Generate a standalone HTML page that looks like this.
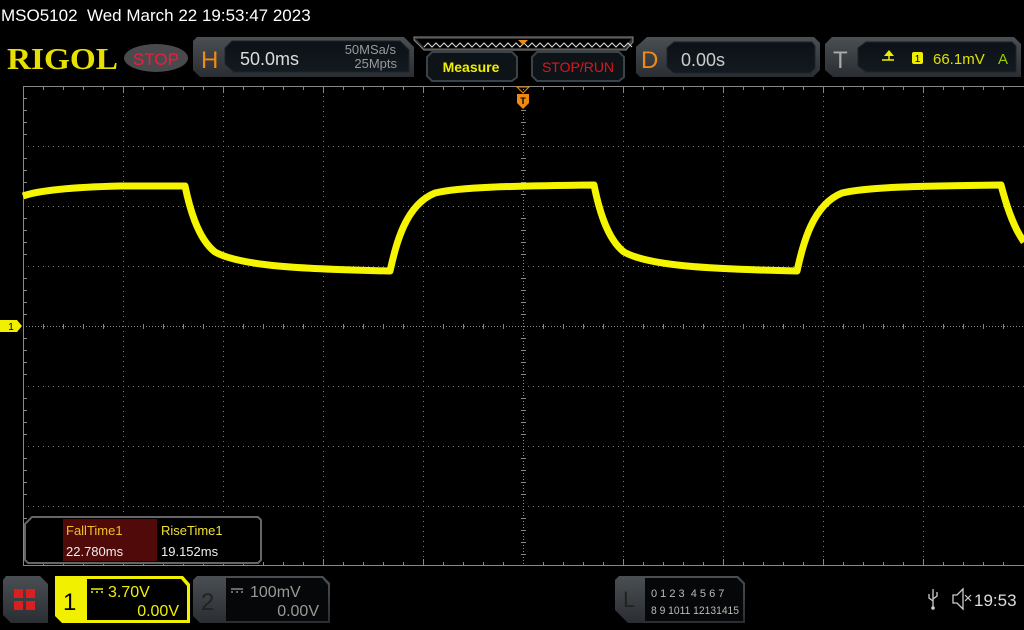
<!DOCTYPE html>
<html><head><meta charset="utf-8"><style>
html,body{margin:0;padding:0;background:#000;width:1024px;height:630px;overflow:hidden}
svg{display:block}
text{font-family:"Liberation Sans",sans-serif}
</style></head><body>
<svg width="1024" height="630" viewBox="0 0 1024 630" xmlns="http://www.w3.org/2000/svg">
<defs>
<linearGradient id="pg" x1="0" y1="0" x2="0" y2="1"><stop offset="0" stop-color="#4a4f54"/><stop offset="1" stop-color="#2a2e32"/></linearGradient>
<linearGradient id="ig" x1="0" y1="0" x2="0" y2="1"><stop offset="0" stop-color="#0b1116"/><stop offset="1" stop-color="#131a20"/></linearGradient>
</defs>
<rect width="1024" height="630" fill="#000"/>
<text x="1" y="21" font-size="17" fill="#fff" style="white-space:pre" xml:space="preserve">MSO5102  Wed March 22 19:53:47 2023</text>

<!-- RIGOL -->
<text x="7" y="69" style="font-family:'Liberation Serif',serif;font-weight:bold" font-size="31" fill="#e8e000" textLength="111" lengthAdjust="spacingAndGlyphs">RIGOL</text>
<ellipse cx="156" cy="58" rx="32" ry="14" fill="#4a4a4e"/>
<text x="156" y="65" font-size="17" fill="#e8203a" text-anchor="middle">STOP</text>

<!-- H box -->
<polygon points="197,37 404,37 414,47 414,77 200,77 193,70 193,41" fill="url(#pg)"/>
<polygon points="232,41 400,41 409,50 409,72 234,72 225,64 225,48" fill="url(#ig)" stroke="#1d2328"/>
<text x="201" y="68" font-size="24" fill="#f08a10">H</text>
<text x="240" y="65" font-size="18" fill="#ddd">50.0ms</text>
<text x="396" y="54" font-size="13" fill="#999" text-anchor="end">50MSa/s</text>
<text x="397" y="68" font-size="13" fill="#999" text-anchor="end">25Mpts</text>

<!-- timeline strip -->
<polygon points="414,37 633,37 633,42 626,50 424,50 414,40" fill="#333" stroke="#888" stroke-width="1"/>
<polygon points="416,39 631,39 625,48 425,48" fill="#000"/>
<path d="M424,47 l4,-4 l4,4 l4,-4 l4,4 l4,-4 l4,4 l4,-4 l4,4 l4,-4 l4,4 l4,-4 l4,4 l4,-4 l4,4 l4,-4 l4,4 l4,-4 l4,4 l4,-4 l4,4 l4,-4 l4,4 l4,-4 l4,4 l4,-4 l4,4 l4,-4 l4,4 l4,-4 l4,4 l4,-4 l4,4 l4,-4 l4,4 l4,-4 l4,4 l4,-4 l4,4 l4,-4 l4,4 l4,-4 l4,4 l4,-4 l4,4 l4,-4 l4,4 l4,-4 l4,4 l4,-4 l4,4 l4,-4 l4,4" fill="none" stroke="#ddd" stroke-width="1"/>
<polygon points="518,40 528,40 523,45" fill="#f08a10"/>

<!-- Measure / STOP-RUN buttons -->
<polygon points="432,52 512,52 517,57 517,77 512,81 432,81 427,76 427,57" fill="#0e1317" stroke="#3a4349" stroke-width="2"/>
<text x="471" y="72" font-size="14" font-weight="bold" fill="#f0f000" text-anchor="middle">Measure</text>
<polygon points="537,52 619,52 624,57 624,77 619,81 537,81 532,76 532,57" fill="#0e1317" stroke="#3a4349" stroke-width="2"/>
<text x="578" y="72" font-size="14" fill="#e0141e" text-anchor="middle">STOP/RUN</text>

<!-- D box -->
<polygon points="647,37 814,37 820,43 820,70 813,77 640,77 636,73 636,47" fill="url(#pg)"/>
<polygon points="674,42 812,42 815,46 815,68 810,73 674,73 667,67 667,48" fill="url(#ig)" stroke="#1d2328"/>
<text x="641" y="68" font-size="24" fill="#f08a10">D</text>
<text x="681" y="66" font-size="18" fill="#ccc">0.00s</text>

<!-- T box -->
<polygon points="832,37 1014,37 1021,44 1021,77 833,77 825,70 825,44" fill="url(#pg)"/>
<polygon points="866,42 1012,42 1016,46 1016,72 866,72 858,66 858,48" fill="url(#ig)" stroke="#1d2328"/>
<text x="833" y="68" font-size="24" fill="#aaa">T</text>
<path d="M882,60 h8 M889,53 v7 h5" fill="none" stroke="#ee0" stroke-width="1.5"/>
<polygon points="884,56 894,56 889,50" fill="#ee0"/>
<rect x="912" y="52" width="11" height="12" rx="2" fill="#ee0"/>
<text x="917.5" y="62" font-size="10" fill="#000" text-anchor="middle">1</text>
<text x="933" y="64" font-size="15" fill="#e0e000">66.1mV</text>
<text x="998" y="64" font-size="15" fill="#9c0">A</text>

<!-- Grid -->
<g stroke="#7a7a7a" stroke-width="1" stroke-dasharray="1,4">
<line x1="123.5" y1="86" x2="123.5" y2="566"/><line x1="223.5" y1="86" x2="223.5" y2="566"/><line x1="323.5" y1="86" x2="323.5" y2="566"/><line x1="423.5" y1="86" x2="423.5" y2="566"/>
<line x1="623.5" y1="86" x2="623.5" y2="566"/><line x1="723.5" y1="86" x2="723.5" y2="566"/><line x1="823.5" y1="86" x2="823.5" y2="566"/><line x1="923.5" y1="86" x2="923.5" y2="566"/>
<line x1="23" y1="146.5" x2="1024" y2="146.5"/><line x1="23" y1="206.5" x2="1024" y2="206.5"/><line x1="23" y1="266.5" x2="1024" y2="266.5"/>
<line x1="23" y1="386.5" x2="1024" y2="386.5"/><line x1="23" y1="446.5" x2="1024" y2="446.5"/><line x1="23" y1="506.5" x2="1024" y2="506.5"/>
</g>
<g stroke="#8a8a8a" stroke-width="1" stroke-dasharray="1,2">
<line x1="523.5" y1="86" x2="523.5" y2="566"/><line x1="23" y1="326.5" x2="1024" y2="326.5"/>
</g>
<g stroke="#888" stroke-width="1" fill="none">
<line x1="23.5" y1="86" x2="23.5" y2="566"/>
<line x1="23" y1="86.5" x2="1024" y2="86.5"/>
<line x1="23" y1="565.5" x2="1024" y2="565.5"/>
</g>
<g stroke="#888" stroke-width="1">
<path d="M43.5,86v4M63.5,86v4M83.5,86v4M103.5,86v4M123.5,86v7M143.5,86v4M163.5,86v4M183.5,86v4M203.5,86v4M223.5,86v7M243.5,86v4M263.5,86v4M283.5,86v4M303.5,86v4M323.5,86v7M343.5,86v4M363.5,86v4M383.5,86v4M403.5,86v4M423.5,86v7M443.5,86v4M463.5,86v4M483.5,86v4M503.5,86v4M543.5,86v4M563.5,86v4M583.5,86v4M603.5,86v4M623.5,86v7M643.5,86v4M663.5,86v4M683.5,86v4M703.5,86v4M723.5,86v7M743.5,86v4M763.5,86v4M783.5,86v4M803.5,86v4M823.5,86v7M843.5,86v4M863.5,86v4M883.5,86v4M903.5,86v4M923.5,86v7M943.5,86v4M963.5,86v4M983.5,86v4M1003.5,86v4"/>
<path d="M43.5,566v-4M63.5,566v-4M83.5,566v-4M103.5,566v-4M123.5,566v-7M143.5,566v-4M163.5,566v-4M183.5,566v-4M203.5,566v-4M223.5,566v-7M243.5,566v-4M263.5,566v-4M283.5,566v-4M303.5,566v-4M323.5,566v-7M343.5,566v-4M363.5,566v-4M383.5,566v-4M403.5,566v-4M423.5,566v-7M443.5,566v-4M463.5,566v-4M483.5,566v-4M503.5,566v-4M543.5,566v-4M563.5,566v-4M583.5,566v-4M603.5,566v-4M623.5,566v-7M643.5,566v-4M663.5,566v-4M683.5,566v-4M703.5,566v-4M723.5,566v-7M743.5,566v-4M763.5,566v-4M783.5,566v-4M803.5,566v-4M823.5,566v-7M843.5,566v-4M863.5,566v-4M883.5,566v-4M903.5,566v-4M923.5,566v-7M943.5,566v-4M963.5,566v-4M983.5,566v-4M1003.5,566v-4"/>
<path d="M43.5,324v5M63.5,324v5M83.5,324v5M103.5,324v5M143.5,324v5M163.5,324v5M183.5,324v5M203.5,324v5M243.5,324v5M263.5,324v5M283.5,324v5M303.5,324v5M343.5,324v5M363.5,324v5M383.5,324v5M403.5,324v5M443.5,324v5M463.5,324v5M483.5,324v5M503.5,324v5M543.5,324v5M563.5,324v5M583.5,324v5M603.5,324v5M643.5,324v5M663.5,324v5M683.5,324v5M703.5,324v5M743.5,324v5M763.5,324v5M783.5,324v5M803.5,324v5M843.5,324v5M863.5,324v5M883.5,324v5M903.5,324v5M943.5,324v5M963.5,324v5M983.5,324v5M1003.5,324v5"/>
<path d="M23,98.5h4M23,110.5h4M23,122.5h4M23,134.5h4M23,158.5h4M23,170.5h4M23,182.5h4M23,194.5h4M23,218.5h4M23,230.5h4M23,242.5h4M23,254.5h4M23,278.5h4M23,290.5h4M23,302.5h4M23,314.5h4M23,338.5h4M23,350.5h4M23,362.5h4M23,374.5h4M23,398.5h4M23,410.5h4M23,422.5h4M23,434.5h4M23,458.5h4M23,470.5h4M23,482.5h4M23,494.5h4M23,518.5h4M23,530.5h4M23,542.5h4M23,554.5h4"/>
<path d="M521,98.5h5M521,110.5h5M521,122.5h5M521,134.5h5M521,158.5h5M521,170.5h5M521,182.5h5M521,194.5h5M521,218.5h5M521,230.5h5M521,242.5h5M521,254.5h5M521,278.5h5M521,290.5h5M521,302.5h5M521,314.5h5M521,338.5h5M521,350.5h5M521,362.5h5M521,374.5h5M521,398.5h5M521,410.5h5M521,422.5h5M521,434.5h5M521,458.5h5M521,470.5h5M521,482.5h5M521,494.5h5M521,518.5h5M521,530.5h5M521,542.5h5M521,554.5h5"/>
</g>

<!-- trigger marker -->
<path d="M517,87 h12 l-6,6 z" fill="none" stroke="#f08a10"/>
<path d="M517,94 h12 v9 l-6,6 l-6,-6 z" fill="#f08a10"/>
<text x="523" y="104" font-size="9" font-weight="bold" fill="#000" text-anchor="middle">T</text>

<!-- CH1 ground marker -->
<polygon points="0,320 17,320 22,326 17,332 0,332" fill="#f0f000"/>
<text x="11" y="330" font-size="10" fill="#000" text-anchor="middle">1</text>

<!-- Waveform -->
<path d="M23,196 C40,190 80,187 120,186 L185,186
C189,205 197,238 215,252 C240,266 300,269 390,271
C396,245 405,205 435,193 C460,187 510,186 594,185
C598,205 606,238 624,252 C649,266 709,269 797,271
C803,245 812,205 842,193 C867,187 917,186 1001,185
C1005,200 1012,225 1024,242"
fill="none" stroke="#f5f500" stroke-width="7" stroke-linejoin="round"/>

<!-- measurement panel -->
<polygon points="32,517 258,517 261,520 261,560 258,563 28,563 25,560 25,524" fill="#000" stroke="#666" stroke-width="2"/>
<rect x="63" y="519" width="94" height="42" fill="#500a0a"/>
<text x="66" y="535" font-size="13" fill="#f0c020">FallTime1</text>
<text x="66" y="556" font-size="13" fill="#eee">22.780ms</text>
<text x="161" y="535" font-size="13" fill="#f0e030">RiseTime1</text>
<text x="161" y="556" font-size="13" fill="#eee">19.152ms</text>

<!-- bottom: menu -->
<polygon points="6,576 40,576 48,584 48,623 11,623 3,615 3,580" fill="url(#pg)"/>
<rect x="14" y="589" width="9" height="9" fill="#d82020"/><rect x="26" y="589" width="9" height="9" fill="#d82020"/>
<rect x="14" y="601" width="9" height="9" fill="#d82020"/><rect x="26" y="601" width="9" height="9" fill="#d82020"/>

<!-- CH1 -->
<polygon points="55,576 183,576 190,584 190,623 62,623 55,616" fill="#f0f000"/>
<polygon points="87,579 181,579 187,586 187,620 87,620" fill="#000"/>
<text x="63" y="610" font-size="24" fill="#000">1</text>
<path d="M91,589h12M91,592h2M96,592h2M101,592h2" stroke="#f0f000" stroke-width="1.5"/>
<text x="108" y="597" font-size="16" fill="#f0f000">3.70V</text>
<text x="179" y="616" font-size="16" fill="#f0f000" text-anchor="end">0.00V</text>

<!-- CH2 -->
<polygon points="197,576 323,576 330,583 330,623 200,623 193,616 193,580" fill="url(#pg)"/>
<polygon points="226,578 322,578 328,585 328,621 226,621" fill="#050708"/>
<text x="201" y="610" font-size="24" fill="#222">2</text>
<path d="M231,589h12M231,592h2M236,592h2M241,592h2" stroke="#888" stroke-width="1.5"/>
<text x="250" y="597" font-size="16" fill="#999">100mV</text>
<text x="319" y="616" font-size="16" fill="#999" text-anchor="end">0.00V</text>

<!-- L box -->
<polygon points="619,576 738,576 745,583 745,623 628,623 615,610 615,580" fill="url(#pg)"/>
<polygon points="645,578 737,578 743,584 743,621 645,621" fill="#050708"/>
<text x="623" y="607" font-size="22" fill="#222">L</text>
<text x="651" y="597" font-size="11" fill="#bbb" style="white-space:pre" xml:space="preserve">0 1 2 3  4 5 6 7</text>
<text x="651" y="614" font-size="11" fill="#bbb" textLength="88" lengthAdjust="spacingAndGlyphs">8 9 1011 12131415</text>

<!-- status icons -->
<path d="M933,589 v18 M929,594 v4 l4,3 M937,592 v4 l-4,3" stroke="#ccc" stroke-width="1.3" fill="none"/>
<circle cx="933" cy="608" r="1.8" fill="#ccc"/>
<path d="M953,595 h4 l6,-6 v20 l-6,-6 h-4 z" fill="none" stroke="#ccc" stroke-width="1.3"/>
<path d="M965,595 l6,6 M971,595 l-6,6" stroke="#ccc" stroke-width="1.2"/>
<text x="974" y="606" font-size="17" fill="#ddd">19:53</text>
</svg>
</body></html>
